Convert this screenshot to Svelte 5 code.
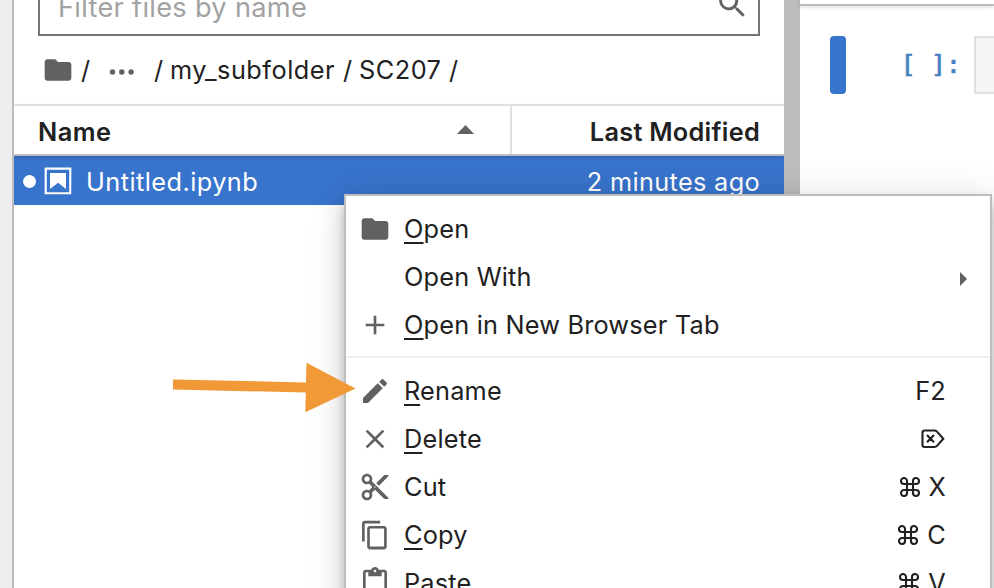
<script>
  const icons = {
    folder: { box: 24, d: 'M10 4H4c-1.1 0-1.99.9-1.99 2L2 18c0 1.1.9 2 2 2h16c1.1 0 2-.9 2-2V8c0-1.1-.9-2-2-2h-8l-2-2z' },
    add: { box: 24, d: 'M19 13h-6v6h-2v-6H5v-2h6V5h2v6h6v2z' },
    edit: { box: 24, d: 'M3 17.25V21h3.75L17.81 9.94l-3.75-3.75L3 17.25zM20.71 7.04c.39-.39.39-1.02 0-1.41l-2.34-2.34c-.39-.39-1.02-.39-1.41 0l-1.83 1.83 3.75 3.75 1.83-1.83z' },
    close: { box: 24, d: 'M19 6.41L17.59 5 12 10.59 6.41 5 5 6.41 10.59 12 5 17.59 6.41 19 12 13.41 17.59 19 19 17.59 13.41 12z' },
    cut: { box: 24, d: 'M9.64 7.64c.23-.5.36-1.05.36-1.64 0-2.21-1.79-4-4-4S2 3.79 2 6s1.79 4 4 4c.59 0 1.14-.13 1.64-.36L10 12l-2.36 2.36C7.14 14.13 6.59 14 6 14c-2.21 0-4 1.79-4 4s1.79 4 4 4 4-1.79 4-4c0-.59-.13-1.14-.36-1.64L12 14l7 7h3v-1L9.64 7.64zM6 8c-1.1 0-2-.89-2-2s.9-2 2-2 2 .89 2 2-.9 2-2 2zm0 12c-1.1 0-2-.89-2-2s.9-2 2-2 2 .89 2 2-.9 2-2 2zm6-7.5c-.28 0-.5-.22-.5-.5s.22-.5.5-.5.5.22.5.5-.22.5-.5.5zM19 3l-6 6 2 2 7-7V3z' },
    copy: { box: 18, d: 'M11.9,1H3.2C2.4,1,1.7,1.7,1.7,2.5v10.2h1.5V2.5h8.7V1z M14.1,3.9h-8c-0.8,0-1.5,0.7-1.5,1.5v10.2c0,0.8,0.7,1.5,1.5,1.5h8c0.8,0,1.5-0.7,1.5-1.5V5.4C15.5,4.6,14.9,3.9,14.1,3.9z M14.1,15.5h-8V5.4h8V15.5z' },
    paste: { box: 24, d: 'M19 2h-4.18C14.4.84 13.3 0 12 0c-1.3 0-2.4.84-2.82 2H5c-1.1 0-2 .9-2 2v16c0 1.1.9 2 2 2h14c1.1 0 2-.9 2-2V4c0-1.1-.9-2-2-2zm-7 0c.55 0 1 .45 1 1s-.45 1-1 1-1-.45-1-1 .45-1 1-1zm7 18H5V4h2v3h10V4h2v16z' },
    search: { box: 18, d: 'M12.1,10.9h-0.7l-0.2-0.2c0.8-0.9,1.3-2.2,1.3-3.5c0-3-2.4-5.4-5.4-5.4S1.8,4.2,1.8,7.1s2.4,5.4,5.4,5.4c1.3,0,2.5-0.5,3.5-1.3l0.2,0.2v0.7l4.1,4.1l1.2-1.2L12.1,10.9z M7.1,10.9c-2.1,0-3.7-1.7-3.7-3.7s1.7-3.7,3.7-3.7s3.7,1.7,3.7,3.7S9.2,10.9,7.1,10.9z' },
    notebook: { box: 22, d: 'M18.7 3.3v15.4H3.3V3.3h15.4m1.5-1.5H1.8v18.3h18.3l.1-18.3zM16.5 16.5l-5.4-4.3-5.6 4.3v-11h11z' }
  };

  const groups = [
    [
      { icon: 'folder', key: 'O', rest: 'pen' },
      { key: '', rest: 'Open With', submenu: true },
      { icon: 'add', key: 'O', rest: 'pen in New Browser Tab' }
    ],
    [
      { icon: 'edit', key: 'R', rest: 'ename', letter: 'F2' },
      { icon: 'close', key: 'D', rest: 'elete', del: true },
      { icon: 'cut', key: '', rest: 'Cut', cmd: true, letter: 'X' },
      { icon: 'copy', key: 'C', rest: 'opy', cmd: true, letter: 'C' },
      { icon: 'paste', key: 'P', rest: 'aste', cmd: true, letter: 'V' }
    ]
  ];
</script>

{#snippet glyph(name)}
  <svg class="icon" viewBox="0 0 {icons[name].box} {icons[name].box}"><path d={icons[name].d} /></svg>
{/snippet}

<div class="app">
  <div class="activity"></div>
  <section class="browser">
    <div class="filter">
      <span>Filter files by name</span>
      {@render glyph('search')}
    </div>
    <nav class="crumbs">
      {@render glyph('folder')}
      <span class="s1">/</span>
      <svg class="dots" viewBox="0 0 26 8"><circle cx="3.5" cy="4" r="2.7" /><circle cx="12.8" cy="4" r="2.7" /><circle cx="22.1" cy="4" r="2.7" /></svg>
      <span class="s2">/</span>
      <span class="sub">my_subfolder</span>
      <span class="s3">/</span>
      <span class="course">SC207</span>
      <span class="s4">/</span>
    </nav>
    <div class="head">
      <div class="name"><span>Name</span><svg viewBox="0 0 17 9"><path d="M0 9L8.5 0 17 9z" /></svg></div>
      <div class="modified">Last Modified</div>
    </div>
    <div class="row">
      <i class="running"></i>
      {@render glyph('notebook')}
      <span class="file">Untitled.ipynb</span>
      <span class="ago">2 minutes ago</span>
    </div>
  </section>
  <div class="handle"></div>
  <main>
    <div class="toolbar"></div>
    <div class="cell">
      <div class="collapser"></div>
      <div class="prompt">[ ]:</div>
      <div class="editor"></div>
    </div>
  </main>

  <div class="menu">
    {#each groups as group, i}
      {#if i > 0}<div class="sep"></div>{/if}
      {#each group as item}
        <div class="item">
          <div class="slot">{#if item.icon}{@render glyph(item.icon)}{/if}</div>
          <span class="label">{#if item.key}<u>{item.key}</u>{/if}{item.rest}</span>
          {#if item.submenu}
            <svg class="caret" viewBox="0 0 7 14"><path d="M0 0L7 7 0 14z" /></svg>
          {/if}
          {#if item.del}
            <svg class="line del" viewBox="0 0 24 20"><path d="M3.5 1.5H13.5Q15 1.5 16 2.6L22.3 9.7 16 16.9Q15 18 13.5 18H3.5Q1.5 18 1.5 16V3.5Q1.5 1.5 3.5 1.5zM6 6L13 13.3M13 6L6 13.3" /></svg>
          {/if}
          {#if item.cmd}
            <svg class="line cmd" viewBox="0 0 20 20"><path d="M7 7V4A3 3 0 1 0 4 7H16A3 3 0 1 0 13 4V16A3 3 0 1 0 16 13H4A3 3 0 1 0 7 16z" /></svg>
          {/if}
          {#if item.letter}<span class="letter">{item.letter}</span>{/if}
        </div>
      {/each}
    {/each}
  </div>

  <svg class="arrow" viewBox="0 0 184 52"><path d="M1 17.6V27.5L133.8 30.5 133.3 50.2 183.5 26.5 134.5 0.8 134 20.4z" /></svg>
</div>

<style>
  .app {
    position: relative;
    display: flex;
    width: 994px;
    height: 588px;
    overflow: hidden;
    background: #fff;
    color: #212121;
    font: 25.3px/30px Inter, "Liberation Sans", sans-serif;
    letter-spacing: .2px;
  }
  svg { display: block; flex: none; fill: #616161; }
  .icon { width: 32px; height: 32px; }
  .activity { box-sizing: border-box; width: 14px; background: #eee; border-right: 2px solid #bdbdbd; }
  .browser { width: 770px; display: flex; flex-direction: column; clip-path: inset(0); }
  .filter {
    box-sizing: border-box;
    height: 66px;
    margin: -30px 24px 0;
    padding: 0 10px 0 18px;
    border: 2px solid #757575;
    display: flex;
    justify-content: space-between;
    color: #a2a2a2;
    font-size: 27.2px;
    letter-spacing: .3px;
  }
  .filter span { padding-top: 21px; }
  .filter .icon { margin-top: 16px; }
  .crumbs { height: 68px; display: flex; align-items: center; padding-left: 28px; white-space: nowrap; letter-spacing: .5px; }
  .crumbs span { flex: none; }
  .s1 { width: 28px; padding-left: 7px; }
  .dots { width: 26px; height: 8px; margin-top: 3px; }
  .s2 { width: 16px; padding-left: 19px; }
  .sub { width: 173px; }
  .s3 { width: 16px; }
  .course { width: 90px; }
  .head {
    box-sizing: border-box;
    height: 52px;
    border-top: 2px solid #e0e0e0;
    border-bottom: 2px solid #bdbdbd;
    display: flex;
    font-weight: 600;
    letter-spacing: .28px;
    box-shadow: 0 2px 4px -1px rgba(0, 0, 0, .2);
    z-index: 1;
  }
  .name {
    box-sizing: border-box;
    width: 498px;
    padding: 4px 36px 0 24px;
    border-right: 2px solid #e0e0e0;
    display: flex;
    align-items: center;
    justify-content: space-between;
    letter-spacing: .5px;
  }
  .name svg { width: 17px; height: 9px; margin-top: -5px; }
  .modified { flex: 1; padding: 11px 24px 0 0; text-align: right; }
  .row { height: 49px; background: #3873cc; color: #fff; display: flex; align-items: center; padding: 0 24px 0 9px; letter-spacing: .45px; }
  .row svg { fill: #fff; margin: 1px 0 0 6px; }
  .running { width: 13px; height: 13px; border-radius: 50%; background: #fff; margin-top: 2px; }
  .file { margin: 2px 0 0 12px; }
  .ago { margin: 2px 0 0 auto; letter-spacing: .33px; }
  .handle { width: 16px; background: #bdbdbd; }
  main { width: 194px; }
  .toolbar { height: 4px; border-bottom: 2px solid #bdbdbd; box-shadow: 0 1px 4px rgba(0, 0, 0, .16); }
  .cell { display: flex; height: 58px; margin: 30px 0 0 30px; }
  .collapser { width: 16px; border-radius: 4px; background: #3873cc; }
  .prompt { width: 115px; margin-right: 13px; padding-top: 12px; box-sizing: border-box; text-align: right; font: 25.5px/32px "DejaVu Sans Mono", monospace; letter-spacing: -.2px; color: #4480bf; -webkit-text-stroke: .7px #4480bf; }
  .editor { flex: 1; border: 2px solid #e0e0e0; border-right: 0; background: #f5f5f5; }
  .menu {
    position: absolute;
    left: 344px;
    top: 194px;
    width: 644px;
    height: 460px;
    padding-top: 9px;
    border: 2px solid #bdbdbd;
    background: #fff;
    box-shadow: 0 6px 10px -2px rgba(0, 0, 0, .2), 0 12px 20px rgba(0, 0, 0, .14), 0 2px 36px rgba(0, 0, 0, .12);
  }
  .item { height: 48px; display: flex; align-items: center; padding: 0 44px 0 13px; }
  .slot { width: 45px; height: 32px; }
  .label { flex: 1; }
  u { text-decoration-thickness: 2px; text-underline-offset: 4px; text-decoration-skip-ink: none; }
  .caret { width: 7px; height: 14px; margin: 4px -21px 0 0; }
  .line { fill: none; stroke: #212121; stroke-width: 2.1; }
  .del { width: 24px; height: 20px; margin-right: 1px; }
  .cmd { width: 20px; height: 20px; margin-right: 9px; }
  .sep { height: 2px; margin: 7px 0 9px; background: #eee; }
  .arrow { position: absolute; left: 172px; top: 362px; width: 184px; height: 52px; fill: #f19937; }
</style>
